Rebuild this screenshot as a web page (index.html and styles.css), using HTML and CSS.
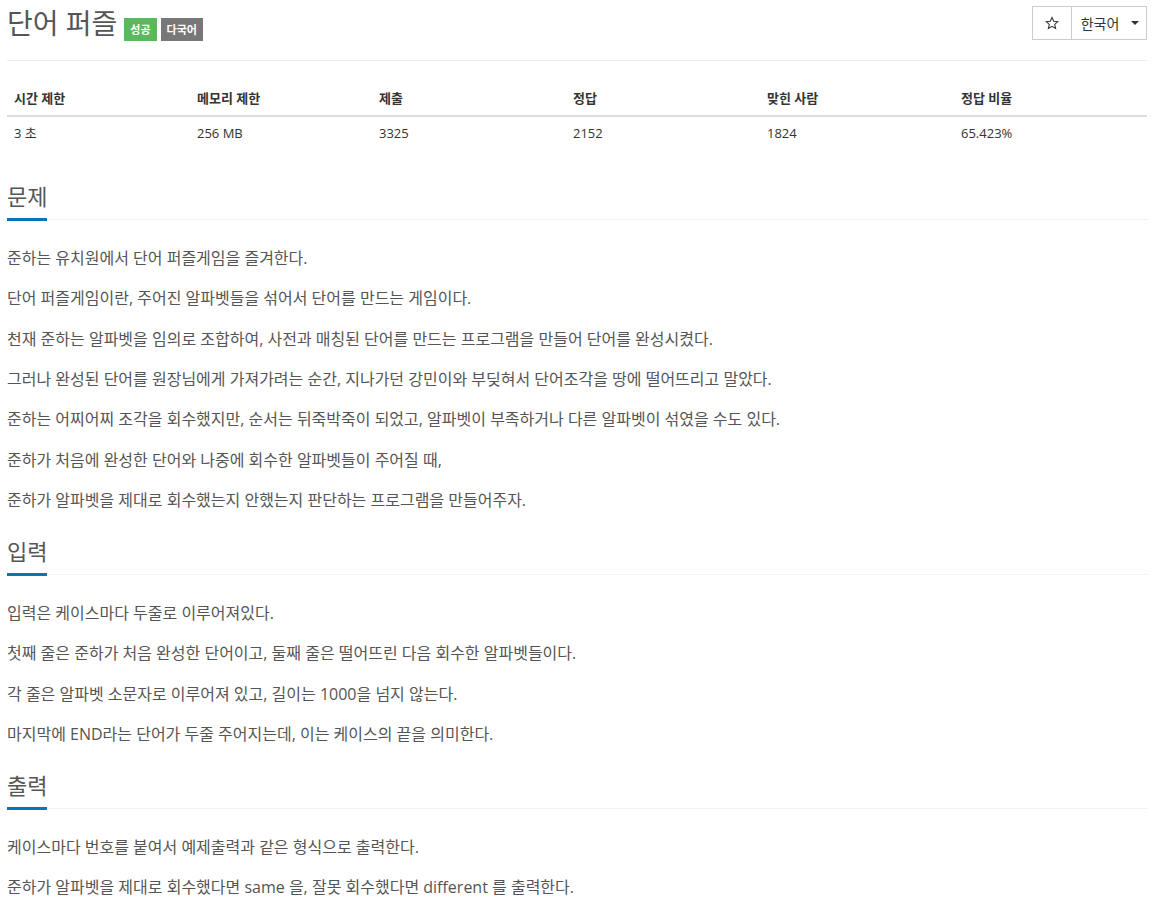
FILE: index.html
```html
<!DOCTYPE html>
<html lang="ko">
<head>
<meta charset="utf-8">
<title>단어 퍼즐</title>
<link rel="stylesheet" href="styles.css">
</head>
<body>
<div class="page">
  <div class="page-header">
    <div class="title-wrap">
      <h1 class="title">단어 퍼즐</h1>
      <span class="badge badge-success">성공</span>
      <span class="badge badge-default">다국어</span>
    </div>
    <div class="btn-group">
      <button class="btn btn-star" type="button">
        <svg width="14" height="14" viewBox="0 0 24 24" aria-hidden="true"><path d="M12 2.5l2.9 6.6 7.1.6-5.4 4.7 1.6 7-6.2-3.7-6.2 3.7 1.6-7L2 9.7l7.1-.6z" fill="none" stroke="#333" stroke-width="1.8" stroke-linejoin="miter"/></svg>
      </button>
      <button class="btn btn-lang" type="button">한국어 <span class="caret"></span></button>
    </div>
  </div>

  <table class="info">
    <colgroup>
      <col class="c1"><col class="c2"><col class="c3"><col class="c4"><col class="c5"><col class="c6">
    </colgroup>
    <thead>
      <tr><th>시간 제한</th><th>메모리 제한</th><th>제출</th><th>정답</th><th>맞힌 사람</th><th>정답 비율</th></tr>
    </thead>
    <tbody>
      <tr><td>3 초</td><td>256 MB</td><td>3325</td><td>2152</td><td>1824</td><td>65.423%</td></tr>
    </tbody>
  </table>

  <section class="sec">
    <div class="headline"><h2>문제</h2></div>
    <div class="problem-text">
      <p>준하는 유치원에서 단어 퍼즐게임을 즐겨한다.</p>
      <p>단어 퍼즐게임이란, 주어진 알파벳들을 섞어서 단어를 만드는 게임이다.</p>
      <p>천재 준하는 알파벳을 임의로 조합하여, 사전과 매칭된 단어를 만드는 프로그램을 만들어 단어를 완성시켰다.</p>
      <p>그러나 완성된 단어를 원장님에게 가져가려는 순간, 지나가던 강민이와 부딪혀서 단어조각을 땅에 떨어뜨리고 말았다.</p>
      <p>준하는 어찌어찌 조각을 회수했지만, 순서는 뒤죽박죽이 되었고, 알파벳이 부족하거나 다른 알파벳이 섞였을 수도 있다.</p>
      <p>준하가 처음에 완성한 단어와 나중에 회수한 알파벳들이 주어질 때,</p>
      <p>준하가 알파벳을 제대로 회수했는지 안했는지 판단하는 프로그램을 만들어주자.</p>
    </div>
  </section>

  <section class="sec">
    <div class="headline"><h2>입력</h2></div>
    <div class="problem-text">
      <p>입력은 케이스마다 두줄로 이루어져있다.</p>
      <p>첫째 줄은 준하가 처음 완성한 단어이고, 둘째 줄은 떨어뜨린 다음 회수한 알파벳들이다.</p>
      <p>각 줄은 알파벳 소문자로 이루어져 있고, 길이는 1000을 넘지 않는다.</p>
      <p>마지막에 END라는 단어가 두줄 주어지는데, 이는 케이스의 끝을 의미한다.</p>
    </div>
  </section>

  <section class="sec">
    <div class="headline"><h2>출력</h2></div>
    <div class="problem-text">
      <p>케이스마다 번호를 붙여서 예제출력과 같은 형식으로 출력한다.</p>
      <p>준하가 알파벳을 제대로 회수했다면 same 을, 잘못 회수했다면 different 를 출력한다.</p>
    </div>
  </section>
</div>
</body>
</html>
```

FILE: styles.css
```css
* { box-sizing: border-box; }

html, body {
  margin: 0;
  padding: 0;
  background: #fff;
}

body {
  font-family: "Open Sans", "Noto Sans CJK KR", sans-serif;
  font-size: 14px;
  color: #333;
}

.page {
  width: 1140px;
  margin-left: 7px;
}

.page-header {
  display: flex;
  justify-content: space-between;
  align-items: flex-start;
  padding: 6px 0 20px;
  border-bottom: 1px solid #eee;
}

.title-wrap {
  display: flex;
  align-items: baseline;
  gap: 4px;
  height: 34px;
}

.title {
  margin: 0 3px 0 0;
  font-size: 28px;
  font-weight: 400;
  line-height: 34px;
  color: #555;
}

.badge {
  display: inline-block;
  font-size: 11px;
  font-weight: 700;
  color: #fff;
  padding: 2px 6px;
  line-height: 19px;
  border-radius: 0;
}

.badge-success { background: #5cb85c; }
.badge-default { background: #777; }

.btn-group {
  display: flex;
}

.btn {
  font-family: inherit;
  font-size: 14px;
  color: #333;
  background: #fff;
  border: 1px solid #ccc;
  height: 34px;
  margin: 0;
  display: flex;
  align-items: center;
  justify-content: center;
  white-space: nowrap;
  cursor: pointer;
}

.btn-star {
  width: 40px;
  padding: 0;
}

.btn-lang {
  width: 76px;
  margin-left: -1px;
  padding: 0 6px 0 8px;
  gap: 12px;
}

.caret {
  display: inline-block;
  width: 0;
  height: 0;
  border-top: 4px solid #333;
  border-left: 4px solid transparent;
  border-right: 4px solid transparent;
}

.info {
  width: 100%;
  border-collapse: collapse;
  table-layout: fixed;
  margin: 19px 0 30px;
}

.c1 { width: 183px; }
.c2 { width: 182px; }
.c3 { width: 194px; }
.c4 { width: 194px; }
.c5 { width: 194px; }
.c6 { width: 193px; }

.info th,
.info td {
  text-align: left;
  line-height: 20px;
  font-size: 13px;
  color: #333;
}

.info th {
  padding: 8px 7px 7px;
  font-weight: 700;
  border-bottom: 2px solid #ddd;
}

.info td {
  padding: 6px 7px 8px;
}

.sec {
  margin-top: 21px;
}

.headline {
  display: flex;
  border-bottom: 1px dotted #e4e9f0;
  margin-bottom: 23px;
}

.headline h2 {
  margin: 0 0 -2px;
  padding: 0 0 7px;
  font-size: 22px;
  font-weight: 400;
  line-height: 30px;
  color: #555;
  border-bottom: 3px solid #0076c0;
}

.problem-text {
  font-size: 16px;
  color: #555;
}

.problem-text p {
  margin: 0 0 10.33px;
  line-height: 30px;
}
```
